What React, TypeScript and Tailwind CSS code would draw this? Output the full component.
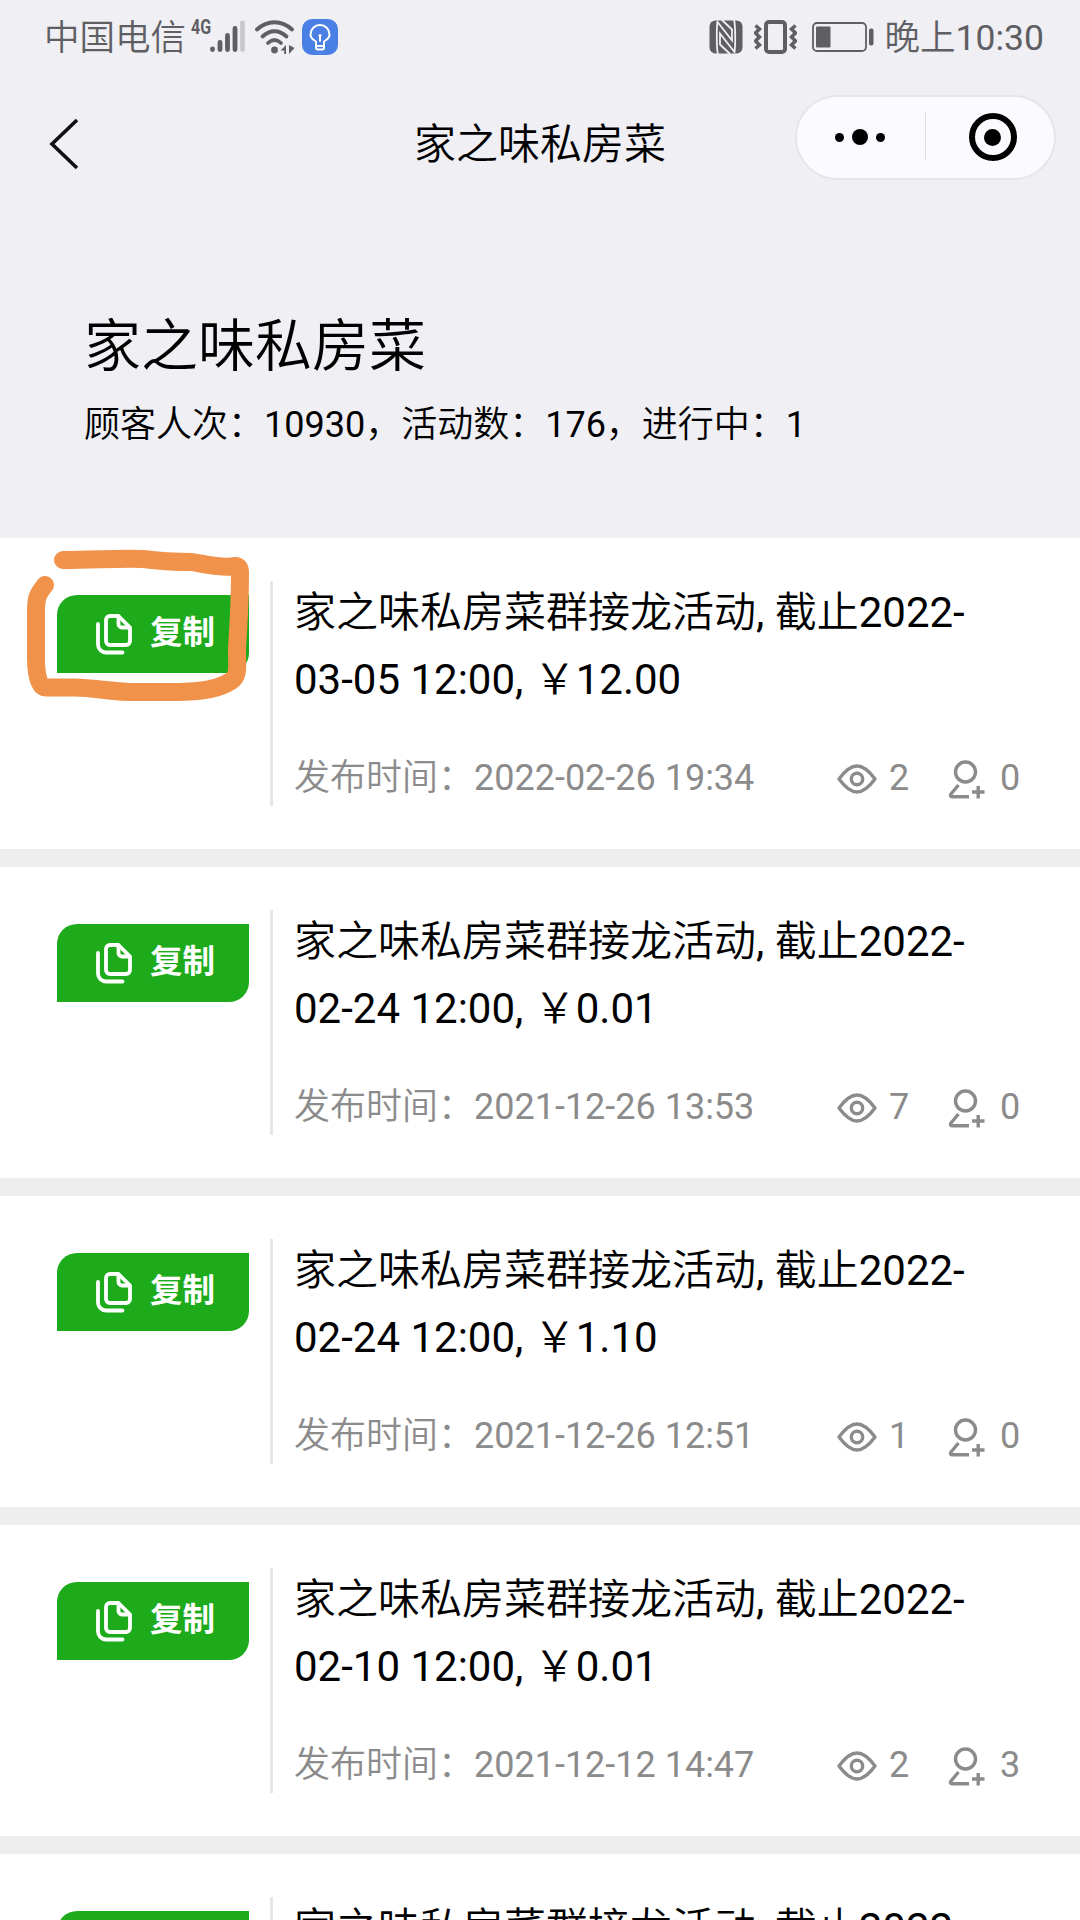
import React from 'react';

type Activity = {
  deadline: string;
  price: string;
  published: string;
  views: number;
  joined: number;
};

const SHOP_NAME = '家之味私房菜';

const activities: Activity[] = [
  { deadline: '2022-03-05 12:00', price: '12.00', published: '2022-02-26 19:34', views: 2, joined: 0 },
  { deadline: '2022-02-24 12:00', price: '0.01', published: '2021-12-26 13:53', views: 7, joined: 0 },
  { deadline: '2022-02-24 12:00', price: '1.10', published: '2021-12-26 12:51', views: 1, joined: 0 },
  { deadline: '2022-02-10 12:00', price: '0.01', published: '2021-12-12 14:47', views: 2, joined: 3 },
  { deadline: '2022-02-10 12:00', price: '0.01', published: '2021-12-12 14:40', views: 1, joined: 0 },
];

const SignalIcon = () => (
  <svg width="35" height="34" viewBox="0 0 35 34" strokeWidth="4.8" strokeLinecap="round" stroke="#5f5f63">
    <path d="M2.5 29v.6M10 22.500v7M17.500 15.500v14M25 8.500v21" />
    <path d="M32.500 3v26.500" stroke="#c9c9cd" />
  </svg>
);

const WifiIcon = () => (
  <svg width="41" height="34" viewBox="0 0 41 34" fill="none" stroke="#5f5f63" strokeWidth="3.800" strokeLinecap="round">
    <path d="M2 9.500C12.500 -0.200 26.500 -0.200 37 9.500" />
    <path d="M7.500 16.500c7.500-7 16.500-7 24 0" />
    <path d="M13 23c4.500-4.300 8.500-4.300 13 0" />
    <circle cx="19.500" cy="30" r="3.400" fill="#5f5f63" stroke="none" />
    <path d="M31 25v9h-1.800v-3.500H25.500zM34 25v9l5.500-6z" fill="#5f5f63" stroke="none" />
  </svg>
);

const BulbIcon = () => (
  <div className="flex h-[36px] w-[36px] items-center justify-center rounded-[10px] bg-[#4a7fe6]">
    <svg width="22" height="27" viewBox="0 0 22 27" fill="none" stroke="#fff" strokeWidth="2" strokeLinecap="round" strokeLinejoin="round">
      <path d="M7 20v-2.500C3.500 15.500 1.500 13.500 1.500 10.500a9.500 9.500 0 0 1 19 0c0 3-2 5-5.500 7V20" />
      <path d="M7 20v3.500a2 2 0 0 0 2 2h4a2 2 0 0 0 2-2V20M7.500 22h7M11 12v5" />
      <circle cx="11" cy="11.500" r="1.500" fill="#fff" stroke="none" />
    </svg>
  </div>
);

const NfcIcon = () => (
  <svg width="34" height="34" viewBox="0 0 34 34">
    <rect x="0.500" y="0.500" width="33" height="33" rx="6" fill="#5f5f63" />
    <path d="M9 34C7.500 30 7.500 8 8.500 2L23 20.500V9.500L13 0M25 0C26.500 4 26.500 26 25.500 32L11 13.500v11L21 34" fill="none" stroke="#efeff4" strokeWidth="1.800" />
  </svg>
);

const VibrateIcon = () => (
  <svg width="43" height="34" viewBox="0 0 43 34" fill="none" stroke="#5f5f63">
    <rect x="12" y="2" width="19" height="30" rx="3" strokeWidth="4" />
    <path d="M1.500 5.500l4 3.500-4 4 4 4-4 4 4 4-4 3.500M41.500 5.500l-4 3.500 4 4-4 4 4 4-4 4 4 3.500" strokeWidth="3.500" />
  </svg>
);

const BatteryIcon = () => (
  <svg width="62" height="30" viewBox="0 0 62 30" fill="#5f5f63">
    <rect x="1" y="1" width="53" height="28" rx="4" fill="none" stroke="#5f5f63" strokeWidth="1.800" />
    <rect x="4" y="4.500" width="14.500" height="21" rx="1" />
    <rect x="57" y="6.500" width="4.500" height="17" rx="2" />
  </svg>
);

const CopyIcon = () => (
  <svg width="36" height="41" viewBox="0 0 36 41" fill="none" stroke="#fff" strokeWidth="3.800" strokeLinecap="round" strokeLinejoin="round">
    <path d="M22.500 2H14a4 4 0 0 0-4 4v21a4 4 0 0 0 4 4h16a4 4 0 0 0 4-4V13.500z" />
    <path d="M22.500 2.500V10a3.500 3.500 0 0 0 3.500 3.500h7.500" />
    <path d="M2 10v20.500a8 8 0 0 0 8 8h16.500" />
  </svg>
);

const EyeIcon = () => (
  <svg width="40" height="30" viewBox="0 0 40 30" fill="none" stroke="#8b8b8b" strokeWidth="3.400">
    <path d="M2 15C9 5.500 14.500 2 20 2s11 3.500 18 13c-7 9.500-12.500 13-18 13S9 24.500 2 15z" strokeLinejoin="round" />
    <circle cx="20" cy="15" r="5.700" />
  </svg>
);

const JoinIcon = () => (
  <svg width="37" height="39" viewBox="0 0 37 39" fill="none" stroke="#8b8b8b" strokeWidth="3.400">
    <circle cx="17.500" cy="12" r="10" />
    <path d="M10.500 25L3 34c-1 1.500-.5 2.700 1 2.700H21" strokeLinejoin="round" />
    <path d="M24 32h12.500M30.200 26v12.500" />
  </svg>
);

const StatusBar = () => (
  <div className="flex h-[74px] items-center justify-between pl-[44px] pr-[36px] text-[35.5px] text-[#5f5f63]">
    <div className="flex items-center">
      <span className="pt-[3px] font-light">中国电信</span>
      <span className="mb-[21px] ml-[5px] w-[19px] origin-left scale-x-80 text-[20px] font-bold leading-none">4G</span>
      <SignalIcon />
      <span className="ml-[10px] mr-[6px]">
        <WifiIcon />
      </span>
      <BulbIcon />
    </div>
    <div className="flex items-center">
      <NfcIcon />
      <span className="ml-[11px] mr-[15px]">
        <VibrateIcon />
      </span>
      <BatteryIcon />
      <span className="ml-[11px] pt-[3px]">
        <span className="font-light">晚上</span>10:30
      </span>
    </div>
  </div>
);

const NavBar = () => (
  <div className="grid h-[126px] grid-cols-[261px_1fr_261px] items-center px-[24px]">
    <svg width="30" height="52" viewBox="0 0 30 52" className="ml-[25px] mt-[14px]" fill="none" stroke="#111" strokeWidth="3.600">
      <path d="M28 2L3 26l25 24" />
    </svg>
    <h1 className="pt-[15px] text-center text-[42px] leading-[60px]">{SHOP_NAME}</h1>
    <div className="flex h-[85px] items-center rounded-full border-2 border-[#e6e6ea] bg-[#fafaff]">
      <div className="flex w-[128px] items-center justify-center gap-2 pr-[2px]">
        <i className="h-[9px] w-[9px] rounded-full bg-black" />
        <i className="h-4 w-4 rounded-full bg-black" />
        <i className="h-[9px] w-[9px] rounded-full bg-black" />
      </div>
      <div className="h-12 w-px bg-[#dcdce0]" />
      <div className="flex flex-1 items-center justify-center pl-[5px]">
        <div className="flex h-[48px] w-[48px] items-center justify-center rounded-full border-[6px] border-black">
          <i className="h-[17px] w-[17px] rounded-full bg-black" />
        </div>
      </div>
    </div>
  </div>
);

const ActivityCard = ({ activity }: { activity: Activity }) => (
  <li className="flex h-[329px] border-b-[18px] border-[#eeeeee] bg-white pl-[57px]">
    <button className="mt-[57px] flex h-[78px] w-[192px] items-center rounded-br-[20px] rounded-tl-[20px] bg-[#1eab1b] pl-[39px] font-['Noto_Sans_CJK_SC',sans-serif] text-[32.5px] font-bold text-white">
      <CopyIcon />
      <span className="ml-[18px] pb-[7px]">复制</span>
    </button>
    <div className="ml-[21px] mt-[43px] h-[225px] w-[3px] bg-[#e6e6e8]" />
    <div className="ml-[21px] flex-1 pt-[41px]">
      <p className="w-[700px] text-[42px] leading-[67px]">
        {`${SHOP_NAME}群接龙活动, 截止${activity.deadline}, ￥${activity.price}`}
      </p>
      <div className="mt-[39px] flex h-[52px] items-center text-[36px] text-[#8b8b8b]">
        <span className="w-[543px]">{`发布时间：${activity.published}`}</span>
        <span className="pt-[2px]">
          <EyeIcon />
        </span>
        <span className="ml-[12px] w-[59px]">{activity.views}</span>
        <span className="pt-[2px]">
          <JoinIcon />
        </span>
        <span className="ml-[15px]">{activity.joined}</span>
      </div>
    </div>
  </li>
);

// hand-drawn marker around the first copy button
const MarkerStroke = () => (
  <svg className="pointer-events-none absolute left-0 top-0" width="270" height="190" viewBox="0 0 270 190" fill="none" stroke="#f1924b" strokeWidth="18" strokeLinecap="round" strokeLinejoin="round">
    <path d="M63 22C95 22 120 20 143 21c15 2 30 3 49 3 17 3 30 6 44 4Q240 29 240 35C240 60 239 80 237 110C237 130 239 138 231 143C218 151 205 153 180 154H130C105 153 95 150 75 149.500H46C38 149 36 135 36 120V75C36 60 37 57 45 47" />
  </svg>
);

export default function App() {
  return (
    <main className="h-[1920px] w-[1080px] overflow-hidden bg-[#efeff4] font-['Roboto','Noto_Sans_CJK_SC_DemiLight','Noto_Sans_CJK_SC',sans-serif] text-black">
      <header className="h-[538px]">
        <StatusBar />
        <NavBar />
        <section className="pl-[84px] pt-[105px]">
          <h2 className="text-[57px] leading-[84px]">{SHOP_NAME}</h2>
          <p className="mt-[10px] text-[36px] leading-[52px]">顾客人次：10930，活动数：176，进行中：1</p>
        </section>
      </header>
      <div className="relative">
        <ul>
          {activities.map((activity, idx) => (
            <ActivityCard key={idx} activity={activity} />
          ))}
        </ul>
        <MarkerStroke />
      </div>
    </main>
  );
}
